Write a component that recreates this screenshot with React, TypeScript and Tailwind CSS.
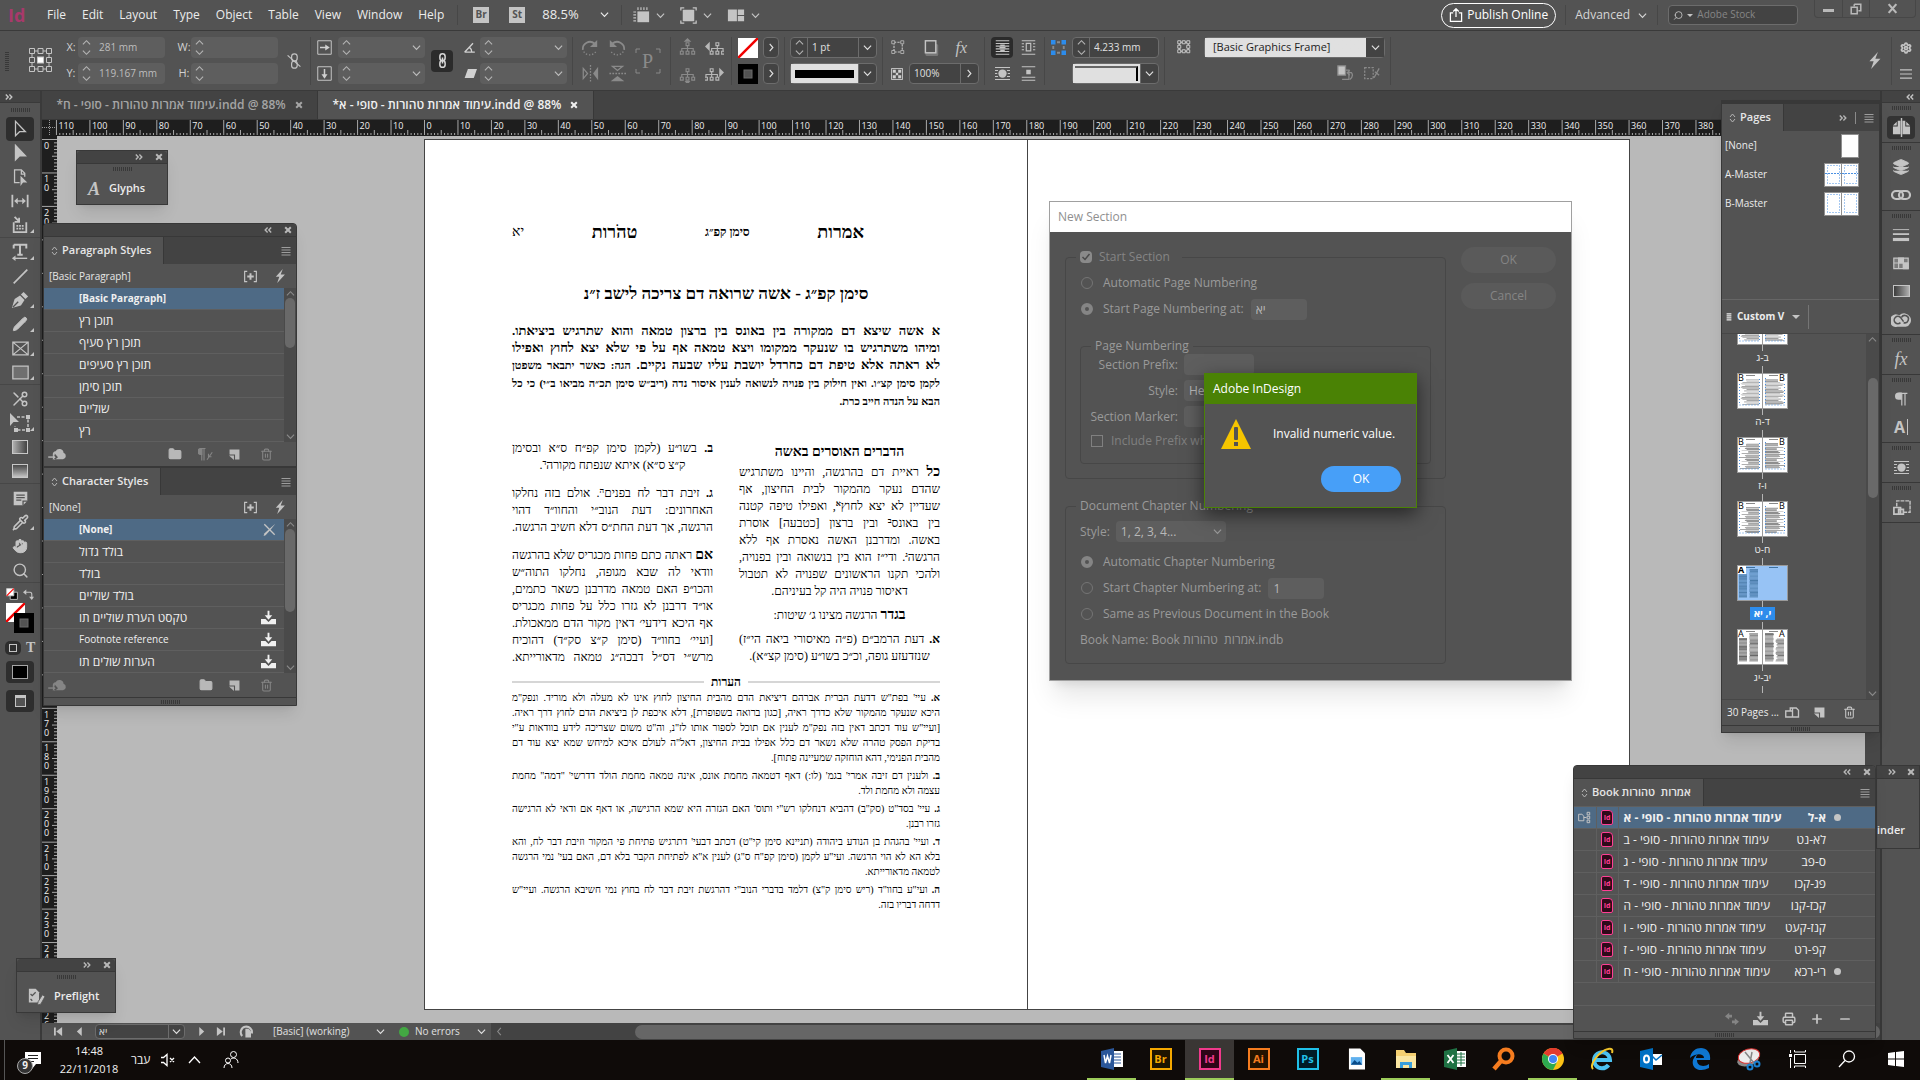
import { useState, type ReactNode } from "react";
import { Scissors, Hand, Search, Trash2, Pencil, Pipette, Folder, Link2, Settings, Layers, Printer, Plus, Minus } from "lucide-react";

const PX_PER_MM = 3.346;

/* ---------- icons ---------- */

function Svg({ children, size = 20, className = "" }: { children: ReactNode; size?: number; className?: string }) {
  return (
    <svg width={size} height={size} viewBox="0 0 20 20" fill="none" stroke="currentColor" strokeWidth={1.5} className={`shrink-0 ${className}`} aria-hidden="true">
      {children}
    </svg>
  );
}

const Chevron = ({ size = 9 }: { size?: number }) => (
  <Svg size={size}>
    <path d="M2 6l8 8 8-8" strokeWidth={2.6} />
  </Svg>
);

const ChevronRight = () => (
  <Svg size={9}>
    <path d="M6 2l7 8-7 8" strokeWidth={2.6} />
  </Svg>
);

const ChevronUp = () => (
  <Svg size={9}>
    <path d="M2 14l8-8 8 8" strokeWidth={2.5} />
  </Svg>
);

const Double = ({ left = false }: { left?: boolean }) => (
  <Svg size={8} className={left ? "rotate-180" : ""}>
    <path d="M2 4l6 6-6 6M11 4l6 6-6 6" strokeWidth={3.5} />
  </Svg>
);

const Cross = () => (
  <Svg size={8}>
    <path d="M3 3l14 14M17 3L3 17" strokeWidth={5} />
  </Svg>
);

const Burger = ({ size = 12 }: { size?: number }) => (
  <Svg size={size}>
    <path d="M1 3h18M1 8h18M1 13h18M1 18h18" strokeWidth={1.6} />
  </Svg>
);

const Updown = () => (
  <svg width="7" height="10" viewBox="0 0 7 10" fill="none" stroke="#b5b5b5" aria-hidden="true">
    <path d="M1 4l2.5-3L6 4M1 6l2.5 3L6 6" />
  </svg>
);

const Bolt = ({ size = 16 }: { size?: number }) => (
  <Svg size={size}>
    <path d="M14 0L4 11h5l-3 9L17 8h-6z" fill="currentColor" stroke="none" />
  </Svg>
);

const PlusBox = () => (
  <Svg size={13}>
    <path d="M5 2H1v16h4M15 2h4v16h-4" strokeWidth={1.8} />
    <path d="M10 5v10M5 10h10" strokeWidth={3} />
  </Svg>
);

const NewPage = () => (
  <Svg size={11}>
    <path d="M1 1h18v18h-8v-9H1z" fill="currentColor" stroke="none" />
    <path d="M0 12h9v8z" fill="currentColor" stroke="none" />
  </Svg>
);

const CloudIn = () => (
  <svg width="19" height="13" viewBox="0 0 20 14" fill="currentColor" aria-hidden="true">
    <path d="M6 12h10a3.500 3.500 0 0 0 .5-6.800A4.500 4.500 0 0 0 8 3.500 3 3 0 0 0 5 7v1h2V6l3.500 4L7 13z" />
    <path d="M0 9h6v1.500H0z" />
    <path d="M5 7l3 3-3 3z" />
  </svg>
);

const Download = ({ size = 15 }: { size?: number }) => (
  <Svg size={size}>
    <path d="M0 12h6l4 4 4-4h6v7H0z" fill="currentColor" stroke="none" />
    <path d="M10 1v7" strokeWidth={2.5} />
    <path d="M5 7h10l-5 6z" fill="currentColor" stroke="none" />
  </Svg>
);

const WrapLines = ({ kind }: { kind: "none" | "box" | "shape" | "jump" }) => (
  <Svg size={15}>
    {kind === "none" && <path d="M1 1h18M1 19h18M1 4.600h18M1 8.200h18M1 11.800h18M1 15.400h18" />}
    {kind === "none" && <path d="M7 6h6v2H7zM6 9h8v2H6zM7 12.500h6v2H7z" fill="currentColor" stroke="none" />}
    {kind === "box" && <path d="M1 1h18M1 5h3M16 5h3M1 9h3M16 9h3M1 13h3M16 13h3M1 19h18M7 4.500h6v10H7z" />}
    {kind === "shape" && <path d="M0 2h20M0 6h4M16 6h4M0 10h3M17 10h3M0 14h4M16 14h4M0 18h20" />}
    {kind === "shape" && <circle cx="10" cy="10" r="5.500" fill="currentColor" stroke="none" />}
    {kind === "jump" && <path d="M1 1h18M1 15h18M1 19h18" />}
    {kind === "jump" && <rect x="7" y="5" width="6" height="6" fill="currentColor" stroke="none" />}
  </Svg>
);

const Tree = ({ arrow }: { arrow: "up" | "down" | "left" | "right" }) => {
  const side = arrow === "left" ? 3 : arrow === "right" ? -3 : 0;
  return (
    <Svg size={19}>
      <g strokeWidth={1.2} transform={`translate(${side} 0)`}>
        <path d="M8.500 5h3v3h-3zM10 8v3M4 14v-3h12v3M10 11v3M2.500 14h3v3h-3zM8.500 14h3v3h-3zM14.500 14h3v3h-3z" />
      </g>
      {arrow === "up" && <path d="M10 0l4 4H6z" fill="currentColor" stroke="none" />}
      {arrow === "down" && <path d="M10 22l3-4H7z" fill="currentColor" stroke="none" />}
      {arrow === "left" && <path d="M0 9l5-5v10z" fill="currentColor" stroke="none" />}
      {arrow === "right" && <path d="M20 9l-5-5v10z" fill="currentColor" stroke="none" />}
    </Svg>
  );
};

const Rotate = ({ flip = false }: { flip?: boolean }) => (
  <Svg size={18} className={flip ? "-scale-x-100" : ""}>
    <path d="M2 12a8 8 0 0 1 13-7" strokeWidth={2} />
    <path d="M18 1v8h-8z" fill="currentColor" stroke="none" />
    <path d="M3 14a8 8 0 0 0 14-1" strokeDasharray="1.500 2" />
  </Svg>
);

const Mirror = ({ vertical = false }: { vertical?: boolean }) => (
  <Svg size={17} className={vertical ? "rotate-90" : ""}>
    <path d="M1.500 4v12l5-6z" />
    <path d="M19 2v16l-6-8z" fill="currentColor" stroke="none" />
    <path d="M10 0v20" strokeDasharray="2 1.500" />
  </Svg>
);

const NoneSwatch = ({ size }: { size: number }) => (
  <svg width={size} height={size} viewBox="0 0 20 20" aria-hidden="true">
    <rect width="20" height="20" fill="#fff" />
    <path d="M0 20L20 0" stroke="#f00000" strokeWidth="2.500" />
  </svg>
);

const StrokeSwatch = ({ size }: { size: number }) => (
  <svg width={size} height={size} viewBox="0 0 20 20" aria-hidden="true">
    <rect width="20" height="20" fill="#000" />
    <rect x="6" y="6" width="8" height="8" fill="#535353" stroke="#6a6a6a" />
  </svg>
);

const ArrowShape = "M5 1.500v16l4.500-4.500H16z";

type Tool = { name: string; icon: ReactNode; more?: boolean };

const toolGroups: Tool[][] = [
  [
    { name: "Selection Tool", icon: <Svg size={18}><path d={ArrowShape} strokeWidth={1.4} /></Svg> },
    { name: "Direct Selection Tool", icon: <Svg size={18}><path d={ArrowShape} fill="currentColor" /></Svg> },
    {
      name: "Page Tool",
      icon: (
        <Svg size={17}>
          <path d="M9 16H3V1h8l4 4v4M11 1v5h4" />
          <path d="M10 8v12l3-4h5z" fill="currentColor" stroke="none" />
        </Svg>
      ),
    },
    {
      name: "Gap Tool",
      icon: (
        <Svg size={18}>
          <path d="M1.500 3v14M18.500 3v14" strokeWidth={2} />
          <path d="M5 10h10" />
          <path d="M3.500 10l4-3.500v7zM16.500 10l-4-3.500v7z" fill="currentColor" stroke="none" />
        </Svg>
      ),
    },
    {
      name: "Content Collector Tool",
      more: true,
      icon: (
        <Svg size={18}>
          <path d="M3 7v11h14V7" strokeWidth={2} />
          <path d="M4 1l5 5M9 2v4.500H4" strokeWidth={2} />
          <path d="M6 11h2M9 11h2M12 11h2M6 14h2M9 14h2M12 14h2" strokeWidth={2} />
        </Svg>
      ),
    },
  ],
  [
    {
      name: "Type Tool",
      more: true,
      icon: (
        <Svg size={18}>
          <path d="M3 2h14v4M10 2v11M3 2v4M7 13h6" strokeWidth={2.2} />
          <path d="M4 17h14" />
          <path d="M1 17l4-3v6z" fill="currentColor" stroke="none" />
        </Svg>
      ),
    },
    { name: "Line Tool", icon: <Svg size={17}><path d="M2 18L18 2" strokeWidth={2} /></Svg> },
    {
      name: "Pen Tool",
      more: true,
      icon: (
        <Svg size={18}>
          <path d="M1 19l3-10 6-4 5 5-4 6z" fill="currentColor" stroke="none" />
          <path d="M11 4l3-3 5 5-3 3z" fill="currentColor" stroke="none" />
          <path d="M2 18l6-6" stroke="#535353" />
        </Svg>
      ),
    },
    { name: "Pencil Tool", more: true, icon: <Pencil size={16} fill="currentColor" strokeWidth={1.5} /> },
    { name: "Rectangle Frame Tool", more: true, icon: <Svg size={17}><path d="M1 2.500h18v15H1zM1 2.500l18 15M19 2.500l-18 15" /></Svg> },
    { name: "Rectangle Tool", more: true, icon: <Svg size={17}><path d="M1 2.500h18v15H1z" fill="#6f6f6f" /></Svg> },
  ],
  [
    { name: "Scissors Tool", icon: <Scissors size={18} strokeWidth={2} className="rotate-180" /> },
    {
      name: "Free Transform Tool",
      more: true,
      icon: (
        <Svg size={20}>
          <path d="M7 4h11v13H5v-4" strokeDasharray="3 1.500" />
          <path d="M16 2h4v4h-4zM16 15h4v4h-4zM4 15h4v4H4z" fill="currentColor" stroke="none" />
          <path d="M0 0v13l3.500-4H9z" fill="currentColor" stroke="none" />
        </Svg>
      ),
    },
    {
      name: "Gradient Swatch Tool",
      icon: <span className="h-[14px] w-4 border border-[#c8c8c8] bg-linear-to-r from-[#b0b0b0] to-[#444]" />,
    },
    {
      name: "Gradient Feather Tool",
      icon: <span className="h-[14px] w-4 border border-[#c8c8c8] bg-linear-to-b from-[#4a4a4a] to-[#c4c4c4]" />,
    },
  ],
  [
    {
      name: "Note Tool",
      icon: (
        <Svg size={17}>
          <path d="M2 2h16v11l-5 5H2z" fill="currentColor" stroke="none" />
          <path d="M5 6h10M5 9h10M5 12h6M13 18v-5h5" stroke="#535353" />
        </Svg>
      ),
    },
    { name: "Eyedropper Tool", more: true, icon: <Pipette size={17} strokeWidth={2.2} /> },
    { name: "Hand Tool", icon: <Hand size={16} fill="currentColor" strokeWidth={1.5} /> },
    { name: "Zoom Tool", icon: <Search size={17} strokeWidth={2} /> },
  ],
];

/* ---------- small shared parts ---------- */

const Grip = () => (
  <span className="h-[4px] w-[19px] bg-[repeating-linear-gradient(90deg,#383838_0_1px,transparent_1px_2px)]" />
);

function Spinner() {
  return (
    <span className="flex flex-col items-center justify-center gap-px text-[#b5b5b5]">
      <Svg size={9}><path d="M2 14l8-8 8 8" strokeWidth={2.5} /></Svg>
      <Svg size={9}><path d="M2 6l8 8 8-8" strokeWidth={2.5} /></Svg>
    </span>
  );
}

function NumberField({ label, value = "", drop = false }: { label: string; value?: string; drop?: boolean }) {
  return (
    <div className="flex h-[21px] w-[87px] items-center rounded-sm bg-[#5e5e5e] pr-1 pl-1 text-[#bdbdbd]">
      <Spinner />
      <input aria-label={label} defaultValue={value} className="ml-2 w-0 min-w-0 flex-1 bg-transparent text-[10px] outline-none" />
      {drop && <Chevron />}
    </div>
  );
}

const Divider = () => <span className="h-[48px] w-px shrink-0 bg-[#474747]" />;

function Stack({ children, className = "" }: { children: ReactNode; className?: string }) {
  return <div className={`flex shrink-0 flex-col gap-[5px] ${className}`}>{children}</div>;
}

function Slot({ children, className = "" }: { children: ReactNode; className?: string }) {
  return <span className={`flex h-[21px] items-center justify-center ${className}`}>{children}</span>;
}

/* ---------- top bars ---------- */

const menus = ["File", "Edit", "Layout", "Type", "Object", "Table", "View", "Window", "Help"];

function MenuBar() {
  return (
    <header className="flex h-[31px] items-center border-b border-[#3a3a3a] bg-[#535353] text-xs text-[#ececec]">
      <span className="w-[39px] pl-2 text-lg font-bold text-[#a8396b]">Id</span>
      <nav className="flex items-center">
        {menus.map((m) => (
          <button key={m} className="px-2">{m}</button>
        ))}
      </nav>
      <span className="mr-[15px] ml-[5px] h-5 w-px bg-[#474747]" />
      <button className="flex size-4 items-center justify-center bg-[#c4c4c4] text-[10px] font-bold text-[#535353]">Br</button>
      <button className="ml-5 flex size-4 items-center justify-center bg-[#c4c4c4] text-[10px] font-bold text-[#535353]">St</button>
      <button className="ml-[17px] flex w-[67px] items-center justify-between text-[13px]">
        88.5% <Chevron />
      </button>
      <span className="mx-[10px] ml-[12px] h-5 w-px bg-[#474747]" />
      <button aria-label="View options" className="flex items-center gap-[6px] text-[#c4c4c4]">
        <Svg size={18}>
          <path d="M6 6h13v12H6z" fill="currentColor" stroke="none" />
          <path d="M6 3h13M3 6v13" strokeWidth={3} strokeDasharray="1.300 2" />
        </Svg>
        <Chevron />
      </button>
      <button aria-label="Screen mode" className="ml-[15px] flex items-center gap-[6px] text-[#c4c4c4]">
        <Svg size={17}>
          <path d="M4 4h12v12H4z" fill="currentColor" />
          <path d="M1 4V1h4M15 1h4v3M19 16v3h-4M5 19H1v-3" />
        </Svg>
        <Chevron />
      </button>
      <button aria-label="Arrange documents" className="ml-[15px] flex items-center gap-[6px] text-[#c4c4c4]">
        <Svg size={18}>
          <path d="M1 4h10v13H1zM12 4h7v6h-7zM12 11h7v6h-7z" fill="currentColor" stroke="none" />
        </Svg>
        <Chevron />
      </button>
      <button className="ml-auto flex h-[25px] items-center gap-1 rounded-full border border-white px-[7px] text-xs font-medium text-white">
        <Svg size={14}>
          <path d="M6 7H2v12h16V7h-4M10 13V2M6 5l4-4 4 4" strokeWidth={1.8} />
        </Svg>
        Publish Online
      </button>
      <span className="mx-[9px] h-5 w-px bg-[#474747]" />
      <button className="flex items-center gap-2 text-xs text-[#d6d6d6]">
        Advanced <Chevron />
      </button>
      <span className="mx-[10px] h-5 w-px bg-[#474747]" />
      <label className="flex h-5 w-[130px] items-center gap-1 rounded-sm border border-[#6c6c6c] bg-[#434343] px-1">
        <Search size={13} className="-scale-x-100 text-[#c4c4c4]" />
        <span className="border-[3px] border-b-0 border-transparent border-t-[#c4c4c4]" />
        <input aria-label="Adobe Stock" placeholder="Adobe Stock" className="w-full bg-transparent text-[10px] outline-none placeholder:text-[#868686]" />
      </label>
      <div className="mr-1 ml-4 flex h-[18px] w-[102px] self-start rounded-b-sm border border-t-0 border-[#474747] text-[#b9b9b9]">
        <button aria-label="Minimize" className="flex w-[28px] items-center justify-center border-r border-[#474747] pt-1">
          <span className="h-[3px] w-[11px] bg-[#b9b9b9]" />
        </button>
        <button aria-label="Restore" className="flex w-[27px] items-center justify-center border-r border-[#474747]">
          <Svg size={12}>
            <path d="M7 2h11v11h-4M7 2v4" strokeWidth={2.5} />
            <path d="M2 7h10v11H2z" strokeWidth={2.5} />
          </Svg>
        </button>
        <button aria-label="Close" className="flex flex-1 items-center justify-center">
          <Svg size={11}><path d="M3 2l14 16M17 2L3 18" strokeWidth={4} /></Svg>
        </button>
      </div>
    </header>
  );
}

const boxBorder = "flex h-[21px] items-center border border-[#6c6c6c] bg-[#434343] text-[#e0e0e0]";

function ControlBar() {
  return (
    <section className="flex h-[60px] items-center border-b border-[#3a3a3a] bg-[#535353] text-[11px] text-[#d0d0d0]">
      <span className="ml-[5px] h-5 w-[4px] bg-[repeating-linear-gradient(0deg,#383838_0_1px,transparent_1px_2px)]" />
      <svg width="25" height="27" viewBox="0 0 25 27" fill="none" stroke="#c4c4c4" className="ml-[19px]" aria-hidden="true">
        <path d="M1.500 1.500h5v5h-5zM10 1.500h5v5h-5zM18.500 1.500h5v5h-5zM1.500 10.500h5v5h-5zM18.500 10.500h5v5h-5zM1.500 19.500h5v5h-5zM10 19.500h5v5h-5zM18.500 19.500h5v5h-5zM6.500 4H10M15 4h3.500M6.500 22H10M15 22h3.500M4 6.500v4M4 15.500v4M21 6.500v4M21 15.500v4" />
        <rect x="9.500" y="10" width="6" height="6" fill="#fff" />
      </svg>
      <Stack className="ml-[11px] w-[14px]">
        <Slot>X:</Slot>
        <Slot>Y:</Slot>
      </Stack>
      <Stack>
        <NumberField label="X position" value="281 mm" />
        <NumberField label="Y position" value="119.167 mm" />
      </Stack>
      <Stack className="ml-3 w-[14px]">
        <Slot>W:</Slot>
        <Slot>H:</Slot>
      </Stack>
      <Stack>
        <NumberField label="Width" />
        <NumberField label="Height" />
      </Stack>
      <button aria-label="Constrain proportions" className="mr-2 ml-2 text-[#c4c4c4]">
        <Svg size={16}>
          <rect x="7" y="1" width="7" height="9" rx="3.500" />
          <rect x="7" y="10" width="7" height="9" rx="3.500" />
          <path d="M2 3l16 14" />
        </Svg>
      </button>
      <Divider />
      <Stack className="mx-[6px] w-[15px]">
        <Slot><Svg size={15}><path d="M1 1v18M1 1h18M1 19h18M19 1v18" strokeWidth={1.2} /><path d="M4 10h9" strokeWidth={2} /><path d="M11 6l6 4-6 4z" fill="currentColor" stroke="none" /></Svg></Slot>
        <Slot><Svg size={15}><path d="M1 1v18M1 1h18M1 19h18M19 1v18" strokeWidth={1.2} /><path d="M10 4v9" strokeWidth={2} /><path d="M6 11l4 6 4-6z" fill="currentColor" stroke="none" /></Svg></Slot>
      </Stack>
      <Stack>
        <NumberField label="Scale X" drop />
        <NumberField label="Scale Y" drop />
      </Stack>
      <button aria-label="Constrain scaling" className="ml-[6px] flex size-[22px] items-center justify-center rounded-sm bg-[#2b2b2b] text-[#d8d8d8]">
        <Svg size={15}>
          <rect x="6.500" y="1" width="7" height="9" rx="3.500" strokeWidth={2} />
          <rect x="6.500" y="10" width="7" height="9" rx="3.500" strokeWidth={2} />
          <path d="M10 6v8" strokeWidth={2} />
        </Svg>
      </button>
      <Stack className="ml-[7px] w-[20px]">
        <Slot><Svg size={12}><path d="M1 17h17M1 17L15 2M9 9c3 2 4 5 4 8" strokeWidth={2.2} /></Svg></Slot>
        <Slot><Svg size={13}><path d="M6 3h14l-5 14H1z" fill="currentColor" stroke="none" /></Svg></Slot>
      </Stack>
      <Stack>
        <NumberField label="Rotation" drop />
        <NumberField label="Shear" drop />
      </Stack>
      <span className="w-[5px]" />
      <Divider />
      <Stack className="ml-2 w-[18px] text-[#8a8a8a]">
        <Slot><Rotate /></Slot>
        <Slot><Mirror /></Slot>
      </Stack>
      <Stack className="ml-[9px] w-[18px] text-[#8a8a8a]">
        <Slot><Rotate flip /></Slot>
        <Slot><Mirror vertical /></Slot>
      </Stack>
      <svg width="26" height="26" viewBox="0 0 26 26" fill="none" stroke="#8a8a8a" className="mx-[9px]" aria-hidden="true">
        <path d="M1 5V1h4M21 1h4v4M25 21v4h-4M5 25H1v-4" />
        <text x="7" y="20" fill="#8a8a8a" stroke="none" fontSize="20" fontFamily="Liberation Serif">P</text>
      </svg>
      <Divider />
      <Stack className="ml-[6px] w-5 text-[#8a8a8a]">
        <Slot><Tree arrow="up" /></Slot>
        <Slot><Tree arrow="down" /></Slot>
      </Stack>
      <Stack className="mx-[7px] w-5 text-[#b8b8b8]">
        <Slot><Tree arrow="left" /></Slot>
        <Slot><Tree arrow="right" /></Slot>
      </Stack>
      <Divider />
      <Stack className="ml-[6px]">
        <Slot><NoneSwatch size={20} /></Slot>
        <Slot><StrokeSwatch size={20} /></Slot>
      </Stack>
      <Stack className="mx-[5px]">
        <button aria-label="Fill" className={`${boxBorder} w-4 justify-center rounded-sm`}><ChevronRight /></button>
        <button aria-label="Stroke" className={`${boxBorder} w-4 justify-center rounded-sm`}><ChevronRight /></button>
      </Stack>
      <Divider />
      <Stack className="mx-[5px] w-[87px]">
        <div className={`${boxBorder} rounded-sm`}>
          <span className="flex h-full w-[17px] items-center justify-center border-r border-[#6c6c6c]"><Spinner /></span>
          <input aria-label="Stroke weight" defaultValue="1 pt" className="ml-1 w-0 flex-1 bg-transparent text-[10px] outline-none" />
          <span className="flex h-full w-[18px] items-center justify-center border-l border-[#6c6c6c]"><Chevron /></span>
        </div>
        <button aria-label="Stroke style" className={`${boxBorder} rounded-sm`}>
          <span className="flex h-full flex-1 items-center bg-[#e0e0e0] px-1"><span className="h-2 w-full bg-black" /></span>
          <span className="flex h-full w-[18px] items-center justify-center border-l border-[#6c6c6c]"><Chevron /></span>
        </button>
      </Stack>
      <Divider />
      <Stack className="mr-[5px] ml-2 w-[88px]">
        <div className="flex h-[21px] items-center justify-between text-[#c4c4c4]">
          <Svg size={15}><path d="M4 3h11v13H4z" strokeDasharray="3 1.500" /><path d="M1 1h4v4H1zM13 1h4v4h-4zM1 14h4v4H1zM13 14h4v4h-4z" fill="#535353" strokeWidth={1} /></Svg>
          <Svg size={16}><rect x="3" y="5" width="16" height="15" rx="2" fill="#777" stroke="none" /><rect x="3" y="1" width="13" height="15" fill="#535353" strokeWidth={1.8} /></Svg>
          <span className="pr-3 font-['Liberation_Serif',serif] text-base italic">fx</span>
        </div>
        <div className="flex items-center justify-between">
          <Svg size={12}><rect x="1" y="1" width="18" height="18" /><path d="M3 3h5v5H3zM12 3h5v5h-5zM8 8h4v4H8zM3 12h5v5H3zM12 12h5v5h-5z" fill="currentColor" stroke="none" /></Svg>
          <div className={`${boxBorder} w-[70px] rounded-sm`}>
            <input aria-label="Opacity" defaultValue="100%" className="ml-1 w-0 flex-1 bg-transparent text-[10px] outline-none" />
            <span className="flex h-full w-[18px] items-center justify-center border-l border-[#6c6c6c]"><ChevronRight /></span>
          </div>
        </div>
      </Stack>
      <Divider />
      <Stack className="ml-[6px] text-[#c4c4c4]">
        <button aria-label="No text wrap" className="flex h-[21px] w-[22px] items-center justify-center rounded-sm bg-[#2b2b2b]"><WrapLines kind="none" /></button>
        <Slot><WrapLines kind="shape" /></Slot>
      </Stack>
      <Stack className="mx-2 text-[#c4c4c4]">
        <Slot><WrapLines kind="box" /></Slot>
        <Slot><WrapLines kind="jump" /></Slot>
      </Stack>
      <Divider />
      <Stack className="mx-[6px] self-start pt-[6px]">
        <Slot>
          <Svg size={15} className="text-[#2d8ceb]">
            <path d="M0 0h6v6H0zM14 0h6v6h-6zM0 14h6v6H0zM14 14h6v6h-6z" fill="currentColor" stroke="none" />
            <path d="M8 3h4M8 17h4M3 8v4M17 8v4" stroke="#8a8a8a" strokeWidth={2.5} />
          </Svg>
        </Slot>
      </Stack>
      <Stack className="w-[87px]">
        <div className={`${boxBorder} rounded-sm`}>
          <span className="flex h-full w-[17px] items-center justify-center border-r border-[#6c6c6c]"><Spinner /></span>
          <input aria-label="Corner size" defaultValue="4.233 mm" className="ml-1 w-0 flex-1 bg-transparent text-[10px] outline-none" />
        </div>
        <button aria-label="Corner shape" className={`${boxBorder} rounded-sm`}>
          <span className="flex h-full flex-1 bg-[#e0e0e0] p-[2px]"><span className="h-[15px] w-full border-t-2 border-r-2 border-t-[#666] border-r-black" /></span>
          <span className="flex h-full w-[18px] items-center justify-center border-l border-[#6c6c6c]"><Chevron /></span>
        </button>
      </Stack>
      <span className="w-[5px]" />
      <Divider />
      <Stack className="mx-3 self-start pt-[6px]">
        <Slot><Svg size={15}><path d="M3 3h12v12H3z" /><path d="M1 1h4v4H1zM7 1h4v4H7zM13 1h4v4h-4zM1 7h4v4H1zM13 7h4v4h-4zM1 13h4v4H1zM7 13h4v4H7zM13 13h4v4h-4z" fill="#535353" strokeWidth={1.2} /></Svg></Slot>
      </Stack>
      <Stack className="w-[181px]">
        <div className={`${boxBorder} relative rounded-sm`}>
          <select aria-label="Object style" className="h-full w-full appearance-none bg-transparent bg-linear-to-r from-[#e0e0e0] from-90% to-[#434343] to-90% pl-2 text-[11px] text-[#1c1c1c] outline-none">
            <option>[Basic Graphics Frame]</option>
          </select>
          <span className="pointer-events-none absolute right-1"><Chevron /></span>
        </div>
        <div className="flex h-[21px] items-center justify-end gap-[9px] pr-[5px] text-[#8a8a8a]">
          <Svg size={17}><path d="M6 6h8v11H6" /><path d="M1 1h9v11H1z" fill="#c4c4c4" /><path d="M13 9h4q3 4-2 8M15 6l-3 3 3 3" /></Svg>
          <Svg size={17}><path d="M2 3h10v13H2z" strokeDasharray="2.500 1.500" /><path d="M13 15l6-11M14 8l5 4" /></Svg>
        </div>
      </Stack>
      <span className="w-[5px]" />
      <Divider />
      <button aria-label="Quick apply" className="mr-2 ml-auto text-[#c4c4c4]"><Bolt size={17} /></button>
      <Divider />
      <Stack className="w-7 text-[#c4c4c4]">
        <button aria-label="Settings" className="flex h-[21px] items-center justify-center"><Settings size={12} strokeWidth={3.5} /></button>
        <button aria-label="Panel menu" className="flex h-[21px] items-center justify-center"><Svg size={12}><path d="M0 3h20M0 10h20M0 17h20" strokeWidth={2} /></Svg></button>
      </Stack>
    </section>
  );
}

/* ---------- left tool bar ---------- */

function ToolBar({ active, onPick }: { active: string; onPick: (name: string) => void }) {
  return (
    <aside className="flex w-[42px] shrink-0 flex-col border-r-2 border-[#3a3a3a] bg-[#535353] text-[#c4c4c4]">
      <div className="flex h-3 items-center border-b border-[#3a3a3a] bg-[#434343] pl-[5px]"><Double /></div>
      <div className="flex h-[14px] items-center justify-center"><Grip /></div>
      {toolGroups.map((group, i) => (
        <div key={i} className="mb-[2px] flex flex-col items-center border-b border-[#474747]">
          {group.map((t) => (
            <button
              key={t.name}
              aria-label={t.name}
              onClick={() => onPick(t.name)}
              className={`relative flex h-6 w-7 items-center justify-center rounded-sm ${t.name === active ? "bg-[#2e2e2e]" : ""}`}
            >
              {t.icon}
              {t.more && <span className="absolute right-0 bottom-1 border-[2px] border-t-transparent border-r-current border-b-current border-l-transparent" />}
            </button>
          ))}
        </div>
      ))}
      <div className="flex h-[18px] items-center justify-between px-[6px]">
        <Svg size={12}><path d="M7 7h12v12H7z" fill="#000" /><path d="M1 1h12v12H1z" fill="#fff" /><path d="M1 13L13 1" stroke="red" strokeWidth={2} /></Svg>
        <Svg size={11}><path d="M4 6h9q3 0 3 4v5" strokeWidth={2} /><path d="M0 6l6-5v10zM16 20l-5-6h9z" fill="currentColor" stroke="none" /></Svg>
      </div>
      <div className="relative ml-[6px] h-[32px] w-[28px]">
        <NoneSwatch size={19} />
        <span className="absolute right-0 bottom-[2px]"><StrokeSwatch size={20} /></span>
      </div>
      <div className="flex h-[26px] items-center gap-[6px] pl-[6px]">
        <button aria-label="Formatting affects container" className="flex h-3 w-[14px] items-center justify-center rounded-sm bg-[#2e2e2e] ring-1 ring-[#2e2e2e]"><span className="size-2 border border-[#c4c4c4]" /></button>
        <button aria-label="Formatting affects text" className="font-['Liberation_Serif',serif] text-sm font-bold">T</button>
      </div>
      <button aria-label="Apply color" className="mx-auto flex h-[22px] w-7 items-center justify-center rounded-sm bg-[#2e2e2e]"><span className="h-[14px] w-4 border border-[#a5a5a5] bg-black" /></button>
      <button aria-label="Normal screen mode" className="mx-auto mt-[7px] flex h-[22px] w-7 items-center justify-center rounded-sm bg-[#2e2e2e]"><span className="h-3 w-[11px] border border-t-[3px] border-[#c4c4c4] bg-[#535353]" /></button>
    </aside>
  );
}

/* ---------- rulers ---------- */

const range = (from: number, to: number) => Array.from({ length: to - from + 1 }, (_, i) => from + i);

function TopRuler() {
  const zero = 382.5;
  return (
    <svg width="100%" height="16" className="block bg-[#1e1e1e] text-[9px]" fill="#f0f0f0" aria-hidden="true">
      <path d="M7.500 0v16M0 7.500h15" stroke="#999" strokeDasharray="1 1" />
      {range(-110, 440).map((mm) => {
        const x = zero + mm * PX_PER_MM;
        const y = mm % 10 === 0 ? 0 : mm % 5 === 0 ? 10 : 13;
        return <line key={mm} x1={x} x2={x} y1={y} y2={15} stroke="#a8a8a8" />;
      })}
      {range(-11, 38).map((n) => (
        <text key={n} x={zero + n * 10 * PX_PER_MM + 2} y={9}>{Math.abs(n * 10)}</text>
      ))}
    </svg>
  );
}

function SideRuler() {
  return (
    <svg width="15" height="887" className="block shrink-0 bg-[#1e1e1e] text-[9px]" fill="#f0f0f0" aria-hidden="true">
      {range(0, 264).map((mm) => {
        const y = 3.5 + mm * PX_PER_MM;
        const x = mm % 10 === 0 ? 0 : mm % 5 === 0 ? 10 : 12;
        return <line key={mm} x1={x} x2={15} y1={y} y2={y} stroke="#a8a8a8" />;
      })}
      {range(0, 26).map((n) =>
        String(n * 10).split("").map((d, i) => (
          <text key={`${n}-${i}`} x={2} y={n * 10 * PX_PER_MM + 13 + i * 9}>{d}</text>
        ))
      )}
    </svg>
  );
}

/* ---------- document ---------- */

function Lines({ lines, last = "right", className = "" }: { lines: ReactNode[]; last?: "right" | "center" | "justify"; className?: string }) {
  const lastAlign = {
    right: "[text-align-last:right]",
    center: "[text-align-last:center]",
    justify: "[text-align-last:justify]",
  }[last];
  return (
    <p className={className}>
      {lines.map((line, i) => (
        <span key={i} className={`block whitespace-nowrap ${i === lines.length - 1 ? lastAlign : "[text-align-last:justify]"}`}>
          {line}
        </span>
      ))}
    </p>
  );
}

const Sup = ({ children }: { children: ReactNode }) => <sup className="text-[8px] font-bold">{children}</sup>;

function Notes() {
  return (
    <div className="flex flex-col gap-[3px] text-[10px] leading-[15px]">
      <Lines
        lines={[
          <><b>א.</b> עיי' בפת"ש דדעת הברית אברהם דיציאת הדם מהבית החיצון לחוץ אינו לא מעלה ולא מוריד. ונפק"מ</>,
          "היכא שנעקר מהמקור שלא כדרך ראיה, [כגון ברואה בשפופרת], דלא איכפת לן ביציאת הדם לחוץ דרך ראיה.",
          '[ועיי"ש עוד דכתב דאין בזה נפק"מ לענין אם תוכל לספור אותו לז"נ, וה"ט משום שצריכה לידע בוודאות ע"י',
          'בדיקת הפסק טהרה שלא נשאר דם כלל אפילו בבית החיצון, דאל"ה לעולם איכא למיחש שמא יצא עוד דם',
          "מהבית הפנימי, דהא הוחזקה שמעיינה פתוח].",
        ]}
      />
      <Lines
        lines={[
          <><b>ב.</b> ולענין דם זיבה אמרי' בגמ' (לו:) דאף דטמאה מחמת אונס, אינה טמאה מחמת הולד דדרשי' "דמה" מחמת</>,
          "עצמה ולא מחמת ולד.",
        ]}
      />
      <Lines
        lines={[
          <><b>ג.</b> עיי' בסד"ט (סק"ב) דהביא דנחלקו רש"י ותוס' האם הגזרה היא שמא הרגישה, או דאף אם ודאי לא הרגישה</>,
          "גזרו רבנן.",
        ]}
      />
      <Lines
        lines={[
          <><b>ד.</b> ועיי' בהגהת בן הנודע ביהודה (תניינא סימן קי"ט) דכתב דבעי' דתרגיש פתיחת פי המקור וזיבת דבר לח, והא</>,
          'בלא הא לא הוי הרגשה. ועי"ע לקמן (סימן קפ"ח ס"ג) לענין א"א לפתיחת הקבר בלא דם, האם בעי\' נמי הרגשה',
          "לטמאה מדאורייתא.",
        ]}
      />
      <Lines
        lines={[
          <><b>ה.</b> ועי"ע בחוו"ד (ריש סימן ק"צ) דלמד בדברי הנוב"י דהרגשת זיבת דבר לח בחוץ נמי חשיבא הרגשה. ועיי"ש</>,
          "דדחה דבריו בזה.",
        ]}
      />
    </div>
  );
}

function LeftPage() {
  return (
    <article dir="rtl" className="w-[603px] shrink-0 border-l border-[#444] bg-white px-[87px] pt-[80px] font-['Liberation_Serif','DejaVu_Sans',serif] text-black">
      <header className="flex h-6 items-center justify-between pr-[76px] text-xs">
        <b className="text-lg">אמרות</b>
        <b>סימן קפ״ג</b>
        <b className="text-lg">טהֹרות</b>
        <span className="text-sm">יא</span>
      </header>
      <h1 className="mt-[38px] text-center text-[17px] leading-6 font-bold">סימן קפ״ג - אשה שרואה דם צריכה לישב ז״נ</h1>
      <Lines
        className="mt-4 text-[13px] leading-[17px] font-bold"
        lines={[
          "א אשה שיצא דם ממקורה בין באונס בין ברצון טמאה והוא שתרגיש ביציאתו.",
          "ומיהו משתרגיש בו שנעקר ממקומו ויצא טמאה אף על פי שלא יצא לחוץ ואפילו",
          <>לא ראתה אלא טיפת דם כחרדל יושבת עליו שבעה נקיים. <span className="text-[11px]">הגה: כאשר יתבאר משפטן</span></>,
          <span className="text-[11px]">לקמן סימן קצ״ו. ואין חילוק בין פנויה לנשואה לענין איסור נדה (ריב״ש סימן תכ״ה מביאו ב״י) כי כל</span>,
          <span className="text-[11px]">הבא על הנדה חייב כרת.</span>,
        ]}
      />
      <div className="mt-[30px] flex justify-between text-xs leading-[17px]">
        <div className="flex w-[201px] flex-col gap-[7px] pt-[3px]">
          <div>
            <h2 className="mb-[3px] text-center text-sm leading-[18px] font-bold">הדברים האוסרים באשה</h2>
            <Lines
              last="center"
              lines={[
                <><b className="text-sm leading-none">כל</b> ראיית דם בהרגשה, והיינו משתרגיש</>,
                "שהדם נעקר מהמקור לבית החיצון, אף",
                <>שעדיין לא יצא לחוץ<Sup>א</Sup>, ואפילו טיפה קטנה</>,
                <>בין באונס<Sup>ב</Sup> ובין ברצון [כטבעה] אוסרת</>,
                "באשה. ומדרבנן האשה נאסרת אף ללא",
                <>הרגשה<Sup>ג</Sup>. ודי״ז הוא בין בנשואה ובין בפנויה,</>,
                "ולהכי תקנו הראשונים שפנויה לא תטבול",
                "דאיסור פנויה היה קל בעיניהם.",
              ]}
            />
          </div>
          <Lines last="center" lines={[<><b className="text-sm leading-none">בגדר</b> הרגשה מצינו ג׳ שיטות:</>]} />
          <Lines
            last="center"
            lines={[<><b>א.</b> דעת הרמב״ם (פ״ה מאיסורי ביאה הי״ז)</>, "שנזדעזע גופה, וכ״כ בשו״ע (סימן קצ״א)."]}
          />
        </div>
        <div className="flex w-[201px] flex-col gap-[11px]">
          <Lines
            last="center"
            lines={[<><b>ב.</b> בשו״ע (לקמן סימן קפ״ח ס״א ובסימן</>, <>ק״צ ס״א) איתא שנפתח מקורה<Sup>ד</Sup>.</>]}
          />
          <Lines
            last="justify"
            lines={[
              <><b>ג.</b> זיבת דבר לח בפנים<Sup>ה</Sup>. אולם בזה נחלקו</>,
              "האחרונים: דעת הנוב״י והחוו״ד דהוי",
              "הרגשה, אך דעת החת״ס דלא חשיב הרגשה.",
            ]}
          />
          <Lines
            last="justify"
            lines={[
              <><b className="text-sm leading-none">אם</b> ראתה כתם פחות מכגריס שלא בהרגשה</>,
              "וודאי לה שבא מגופה, נחלקו התוה״ש",
              "והכו״פ האם טמאה מדרבנן כשאר כתמים,",
              "או״ד דרבנן לא גזרו כלל על פחות מכגריס",
              "אף היכא דידעי׳ דאין מקור הדם ממאכולת.",
              "[ועיי׳ בחוו״ד (סימן ק״צ סק״ד) דהוכיח",
              "מרש״י דס״ל דבכה״ג טמאה מדאורייתא.",
            ]}
          />
        </div>
      </div>
      <div className="mt-2 flex h-4 items-center gap-[7px] text-xs font-bold before:h-[2px] before:flex-1 before:bg-[#d6d6d6] after:h-[2px] after:flex-1 after:bg-[#d6d6d6]">
        הערות
      </div>
      <Notes />
    </article>
  );
}

/* ---------- floating panels ---------- */

function WindowStrip({ left = true }: { left?: boolean }) {
  return (
    <div className="flex h-[13px] items-center justify-end gap-[12px] rounded-t-sm border-b border-[#383838] bg-[#434343] pr-1 text-[#b8b8b8]">
      <Double left={left} />
      <button aria-label="Close"><Cross /></button>
    </div>
  );
}

function PanelTabs({ title, children }: { title: string; children?: ReactNode }) {
  return (
    <div className="flex h-[27px] bg-[#434343]">
      <button className="flex items-center gap-1 border-r border-[#383838] bg-[#535353] pr-3 pl-[7px] text-[11px] font-semibold whitespace-pre text-[#e6e6e6]">
        <Updown /> {title}
      </button>
      <span className="ml-auto flex items-center gap-2 pr-[5px] text-[#b5b5b5]">
        {children}
        <button aria-label="Panel menu"><Burger size={10} /></button>
      </span>
    </div>
  );
}

function ScrollRail({ className, thumb }: { className: string; thumb: string }) {
  return (
    <div className={`flex flex-col items-center justify-between bg-[#4a4a4a] py-px text-[#8a8a8a] ${className}`}>
      <ChevronUp />
      <span className={`mb-auto w-[10px] rounded-full bg-[#696969] ${thumb}`} />
      <Chevron />
    </div>
  );
}

type StyleRow = { name: string; latin?: boolean; mark?: "none" | "import" };

function StyleList({ title, current, rows, thumb, footer }: { title: string; current: string; rows: StyleRow[]; thumb: string; footer: ReactNode }) {
  const [selected, setSelected] = useState(0);
  return (
    <section>
      <PanelTabs title={title} />
      <div className="flex h-6 items-center gap-4 pr-[9px] pl-[5px] text-[10px] text-[#e6e6e6]">
        <span className="mr-auto">{current}</span>
        <button aria-label="Clear overrides" className="text-[#c4c4c4]"><PlusBox /></button>
        <button aria-label="Quick apply" className="text-[#c4c4c4]"><Bolt size={14} /></button>
      </div>
      <div className="flex">
        <ul className="flex-1">
          {rows.map((r, i) => (
            <li key={r.name} className={`border-b border-[#5f5f5f] ${i === selected ? "bg-[#4e6a85] font-bold" : ""}`}>
              <button onClick={() => setSelected(i)} className={`flex h-[21px] w-full items-center justify-between pr-2 pl-[35px] text-[#f0f0f0] ${r.latin ? "text-[10px]" : "text-xs"}`}>
                {r.name}
                {r.mark === "import" && <Download />}
                {r.mark === "none" && <Svg size={13} className="text-[#c4c4c4]"><path d="M2 2l16 16" strokeWidth={2} /><path d="M19 1l-7 9-8 9-3 1 1-4 9-8z" fill="currentColor" stroke="none" /></Svg>}
              </button>
            </li>
          ))}
        </ul>
        <ScrollRail className="w-3" thumb={thumb} />
      </div>
      <div className="flex h-6 items-center text-[#b8b8b8]">{footer}</div>
    </section>
  );
}

const paragraphStyles: StyleRow[] = [
  { name: "[Basic Paragraph]", latin: true },
  { name: "תוכן רץ" },
  { name: "תוכן רץ סעיף" },
  { name: "תוכן רץ סעיפים" },
  { name: "תוכן סימן" },
  { name: "שוליים" },
  { name: "רץ" },
];

const characterStyles: StyleRow[] = [
  { name: "[None]", latin: true, mark: "none" },
  { name: "בולד גדול" },
  { name: "בולד" },
  { name: "בולד שוליים" },
  { name: "טקסט הערת שוליים תו", mark: "import" },
  { name: "Footnote reference", latin: true, mark: "import" },
  { name: "הערות שולים תו", mark: "import" },
];

function StylesPanel() {
  return (
    <div className="absolute top-[223px] left-[43px] w-[254px] rounded-t border border-[#383838] bg-[#535353] shadow-lg">
      <WindowStrip />
      <StyleList
        title="Paragraph Styles"
        current="[Basic Paragraph]"
        rows={paragraphStyles}
        thumb="h-[50px]"
        footer={
          <>
            <span className="ml-1"><CloudIn /></span>
            <span className="ml-auto flex items-center gap-4 pr-[23px]">
              <Folder size={14} fill="currentColor" />
              <Svg size={15} className="text-[#858585]"><path d="M8 2v16M5 2v16M3 2h7M12 17l7-10M14 9v4h4" /><path d="M5 2v8H4a4 4 0 0 1 0-8z" fill="currentColor" /></Svg>
              <NewPage />
              <Trash2 size={13} className="ml-1 text-[#858585]" />
            </span>
          </>
        }
      />
      <div className="h-[2px] bg-[#383838]" />
      <StyleList
        title="Character Styles"
        current="[None]"
        rows={characterStyles}
        thumb="h-[83px]"
        footer={
          <>
            <span className="ml-1 text-[#858585]"><CloudIn /></span>
            <span className="ml-auto flex items-center gap-4 pr-[23px]">
              <Folder size={14} fill="currentColor" />
              <NewPage />
              <Trash2 size={13} className="ml-1 text-[#858585]" />
            </span>
          </>
        }
      />
      <div className="flex h-2 items-center justify-center border-t border-[#383838]"><Grip /></div>
    </div>
  );
}

function MiniPanel({ title, icon, className }: { title: string; icon: ReactNode; className: string }) {
  return (
    <div className={`absolute border border-[#383838] bg-[#535353] shadow-lg ${className}`}>
      <WindowStrip left={false} />
      <div className="flex h-[9px] items-center justify-center"><Grip /></div>
      <button className="flex h-[31px] w-full items-center gap-[9px] pl-[11px] text-[11px] font-semibold text-[#ececec]">
        {icon}
        {title}
      </button>
    </div>
  );
}

/* ---------- pages panel ---------- */

const spreads = [
  { label: "ב-ג", master: "B", seed: 3 },
  { label: "ד-ה", master: "B", seed: 5 },
  { label: "ו-ז", master: "B", seed: 19 },
  { label: "ח-ט", master: "B", seed: 11 },
  { label: "י, יא", master: "A", seed: 13, active: true },
  { label: "יב-יג", master: "A", seed: 17 },
];

const noise = (i: number, seed: number) => ((i * i * 7 + i * seed * 3 + seed) % 11) / 11;

function SpreadThumb({ master, seed, active }: { master: string; seed: number; active?: boolean }) {
  return (
    <svg width="51" height="36" viewBox="0 0 51 36" className="block" aria-hidden="true">
      <rect x="0.500" y="0.500" width="50" height="35" fill={active ? "#97c3f5" : "#fff"} stroke="#9a9a9a" />
      {range(0, 25).map((i) => {
        const a = noise(i, seed);
        const b = noise(i + 3, seed);
        if (master === "A") {
          return (
            <g key={i} fill={active ? "#3f719f" : "#555"}>
              <rect x={2} y={9 + i * 0.9} width={8} height="1" opacity={0.4 + a * 0.6} />
              <rect x={12 + b} y={4 + i * 1.1} width={9 - b} height="1" opacity={0.4 + b * 0.6} />
              {!active && <rect x={28} y={4 + i * 1.1} width={8 + a} height="1" opacity={0.4 + a * 0.6} />}
              {!active && i > 4 && <rect x={38 + a * 3} y={4 + i * 1.1} width={9 - a * 3} height="1" opacity={0.3 + b * 0.6} />}
            </g>
          );
        }
        return (
          <g key={i} fill="#444">
            <rect x={3 + a * 9} y={6 + i} width={19 - a * 9} height="1" opacity={0.15 + b * 0.45} />
            <rect x={28} y={6 + i} width={20 - b * 9} height="1" opacity={0.15 + a * 0.5} />
          </g>
        );
      })}
      {master === "B" && <path d="M2.500 5v27h20v-27M28.500 5v27h19v-27" fill="none" stroke="#4a90e2" strokeDasharray="1 2" />}
      <path d="M9 2.500h9M32 2.500h9" stroke={active ? "#3f719f" : "#888"} />
      {!active && <path d="M25.500 0v36" stroke="#9a9a9a" />}
      <rect x="1" y="1" width="8" height="8" fill="#fff" />
      <text x="1" y="8" fontSize="9" fontWeight={active ? 700 : 400}>{master}</text>
      {!active && <rect x="41" y="1" width="8" height="8" fill="#fff" />}
      {!active && <text x="42" y="8" fontSize="9">{master}</text>}
    </svg>
  );
}

function MasterRow({ name, pages, dashed = false }: { name: string; pages: number; dashed?: boolean }) {
  return (
    <li className="flex h-[29px] items-center justify-between">
      {name}
      <svg width={pages * 17 + 1} height="24" fill="#fff" stroke="#8f8f8f" aria-hidden="true">
        {range(0, pages - 1).map((i) => (
          <g key={i}>
            <rect x={i * 17 + 0.5} y="0.500" width="17" height="23" />
            {pages > 1 && <rect x={i * 17 + 3.5} y="2.500" width="12" height="18" stroke="#4a90e2" strokeDasharray="1 2" />}
            {dashed && <path d={`M${i * 17 + 1} 10.500h16`} stroke="#4a90e2" strokeDasharray="2 1" />}
          </g>
        ))}
      </svg>
    </li>
  );
}

function PagesPanel() {
  return (
    <div className="absolute top-[100px] right-[40px] w-[159px] border border-[#383838] bg-[#535353] text-[10px] text-[#ececec] shadow-lg">
      <div className="h-[3px] bg-[#383838]" />
      <PanelTabs title="Pages">
        <Double />
        <span className="h-3 w-px bg-[#8a8a8a]" />
      </PanelTabs>
      <ul className="h-[169px] border-b border-[#666] pr-[20px] pl-[3px]">
        <MasterRow name="[None]" pages={1} />
        <MasterRow name="A-Master" pages={2} dashed />
        <MasterRow name="B-Master" pages={2} />
      </ul>
      <div className="flex h-[34px] items-center gap-1 border-b border-[#474747] pl-[3px]">
        <Svg size={8}><path d="M4 2h12M4 7h12M4 12h12M4 17h12" strokeWidth={3} /></Svg>
        <button className="flex items-center gap-2 font-bold">
          Custom V <span className="border-[4px] border-b-0 border-transparent border-t-[#c4c4c4]" />
        </button>
        <span className="ml-1 h-6 w-px bg-[#757575]" />
      </div>
      <div className="flex h-[365px] overflow-hidden">
        <ul className="-mt-[25px] w-[81px]">
          {spreads.map((s) => (
            <li key={s.label} className="flex h-16 flex-col items-center">
              <SpreadThumb master={s.master} seed={s.seed} active={s.active} />
              <span className="h-[6px] w-px bg-[#b5b5b5]" />
              <span className={`px-1 leading-[13px] ${s.active ? "bg-[#2d8ceb] font-bold text-white" : ""}`}>{s.label}</span>
              <span className="mt-[2px] h-[7px] w-px bg-[#b5b5b5]" />
            </li>
          ))}
        </ul>
        <ScrollRail className="ml-auto w-[13px]" thumb="mt-[34px] h-[120px]" />
      </div>
      <div className="flex h-[26px] items-center gap-[14px] border-t border-[#474747] pl-[5px] text-[#c4c4c4]">
        <span className="-mr-2 text-[#ececec]">30 Pages ...</span>
        <Svg size={15}><path d="M1 8h9v8H1zM10 4h5l3 3v9h-8zM7 8V4h3" strokeWidth={1.8} /></Svg>
        <NewPage />
        <Trash2 size={13} className="ml-1" />
      </div>
      <div className="flex h-[7px] items-center justify-center border-t border-[#383838]"><Grip /></div>
    </div>
  );
}

const dockGroups: { name: string; icon: ReactNode }[][] = [
  [{ name: "Pages", icon: <Svg size={19}><path d="M1 9h5V3h3v14H1zM14 3h-3v14h8V9h-5z" fill="currentColor" stroke="none" /><path d="M1 8l4-4v4zM19 8l-4-4v4z" fill="currentColor" stroke="none" /><path d="M10 0v20" /></Svg> }],
  [
    { name: "Layers", icon: <Layers size={18} fill="currentColor" strokeWidth={1.2} /> },
    { name: "Links", icon: <Svg size={20}><rect x="1" y="6" width="11" height="8" rx="4" strokeWidth={2.2} /><rect x="8" y="6" width="11" height="8" rx="4" strokeWidth={2.2} /></Svg> },
  ],
  [
    { name: "Stroke", icon: <Svg size={18}><path d="M1 4h18" strokeWidth={1} /><path d="M1 9h18" strokeWidth={2} /><path d="M1 15h18" strokeWidth={3.5} /></Svg> },
    { name: "Swatches", icon: <Svg size={16}><path d="M1 4h18v13H1z" fill="#7b7b7b" /><path d="M7 4h6v6H7zM13 10h6v7h-6z" fill="currentColor" /><path d="M1 10h18M7 4v13M13 4v13" /></Svg> },
    { name: "Gradient", icon: <span className="h-3 w-[17px] border border-[#c4c4c4] bg-linear-to-r from-[#3c3c3c] to-[#b0b0b0]" /> },
    {
      name: "CC Libraries",
      icon: (
        <Svg size={21}>
          <path d="M6 17a6 6 0 1 1 2-11 6.500 6.500 0 1 1 6 11z" fill="currentColor" stroke="none" />
          <path d="M9 13a3.500 3.500 0 1 1 0-5l3 4M10 8a3.500 3.500 0 1 1 2 5" stroke="#535353" />
        </Svg>
      ),
    },
  ],
  [{ name: "Effects", icon: <span className="font-['Liberation_Serif',serif] text-lg leading-none italic">fx</span> }],
  [
    { name: "Paragraph", icon: <Svg size={16}><path d="M15 3v15M11 3v15M7 3h11" /><path d="M11 2v9H7a4.500 4.500 0 0 1 0-9z" fill="currentColor" stroke="none" /></Svg> },
    { name: "Character", icon: <span className="border-r border-current pr-[2px] text-base leading-none font-bold">A</span> },
  ],
  [{ name: "Text Wrap", icon: <WrapLines kind="shape" /> }],
  [{ name: "Pathfinder", icon: <Svg size={19}><path d="M5 9V3h14v12h-9" strokeDasharray="4 1" /><path d="M2 10h7v7H2zM7 12h5v5H7z" fill="#535353" strokeWidth={1.8} /></Svg> }],
];

function Dock() {
  return (
    <aside className="flex w-10 shrink-0 flex-col border-l-2 border-[#383838] bg-[#535353] text-[#c4c4c4]">
      <div className="flex h-3 items-center justify-end border-b border-[#383838] bg-[#434343] pr-[6px]"><Double left /></div>
      {dockGroups.map((g, i) => (
        <div key={i} className="flex flex-col items-center border-b border-[#383838] pb-px">
          <span className="flex h-[10px] items-center"><Grip /></span>
          {g.map((d) => (
            <button key={d.name} aria-label={d.name} className="flex h-7 items-center">
              <span className={`flex h-[23px] w-7 items-center justify-center rounded-sm ${d.name === "Pages" ? "bg-[#333]" : ""}`}>{d.icon}</span>
            </button>
          ))}
        </div>
      ))}
    </aside>
  );
}

/* ---------- book panel ---------- */

const chapters = [
  { letter: "א", pages: "א-ל", open: true },
  { letter: "ב", pages: "לא-נט" },
  { letter: "ג", pages: "ס-פב" },
  { letter: "ד", pages: "פג-קכו" },
  { letter: "ה", pages: "קכז-קנו" },
  { letter: "ו", pages: "קנז-קעט" },
  { letter: "ז", pages: "קפ-רט" },
  { letter: "ח", pages: "רי-רכא", open: true },
];

function BookPanel() {
  return (
    <div className="absolute top-[765px] right-[44px] w-[303px] rounded-t border border-[#383838] bg-[#535353] text-xs text-[#f0f0f0] shadow-lg">
      <WindowStrip />
      <PanelTabs title="Book אמרות  טהורות" />
      <table className="w-full border-collapse">
        <tbody>
          {chapters.map((c, i) => (
            <tr key={c.letter} className={`h-[22px] border-y border-[#5f5f5f] ${i === 0 ? "bg-[#4e6a85] font-bold" : ""}`}>
              <td className="w-[22px] border-r border-[#5f5f5f] pl-1 text-[#c4c4c4]">
                {i === 0 && <Svg size={13}><path d="M1 5h5l3 3v7H1zM9 10h4M14 2h4v4h-4zM14 8h4v4h-4zM14 14h4v4h-4z" /></Svg>}
              </td>
              <td className="w-[22px] border-r border-[#5f5f5f]">
                <span className="mx-auto flex h-[15px] w-3 items-center justify-center rounded-[2px] rounded-tr-[4px] border border-[#ff3f94] bg-[#2f0a1a] text-[7px] font-bold text-[#ff3f94]">Id</span>
              </td>
              <td className="pl-[5px] whitespace-nowrap">עימוד אמרות טהורות - סופי - {c.letter}</td>
              <td dir="rtl" className="w-[42px] text-right whitespace-nowrap">{c.pages}</td>
              <td className="w-[49px] pl-2">{c.open && <span className="block size-[7px] rounded-full bg-[#c4c4c4]" />}</td>
            </tr>
          ))}
        </tbody>
      </table>
      <div className="mt-[22px] flex h-[26px] items-center justify-end gap-[14px] border-t border-[#5f5f5f] pr-[23px] text-[#c4c4c4]">
        <Svg size={14} className="text-[#858585]"><path d="M0 6l6-5v3h4v4H6v3zM20 14l-6 5v-3h-4v-4h4V9z" fill="currentColor" stroke="none" /></Svg>
        <Download size={15} />
        <Printer size={14} strokeWidth={2.5} />
        <Plus size={14} strokeWidth={3} />
        <Minus size={14} strokeWidth={3} />
      </div>
      <div className="flex h-[7px] items-center justify-center border-t border-[#383838]"><Grip /></div>
    </div>
  );
}

/* ---------- dialogs ---------- */

function Radio({ name, label, checked = false }: { name: string; label: string; checked?: boolean }) {
  return (
    <label className="flex items-center gap-[10px]">
      <input
        type="radio"
        name={name}
        disabled
        defaultChecked={checked}
        className="size-3 appearance-none rounded-full border border-[#757575] checked:border-4 checked:border-[#858585]"
      />
      {label}
    </label>
  );
}

const dialogField = "h-[21px] rounded-sm bg-[#5e5e5e] px-[5px] text-[#b8b8b8] outline-none";

function NewSectionDialog() {
  return (
    <div role="dialog" aria-label="New Section" className="absolute top-[201px] left-[1049px] w-[523px] border border-[#a0a0a0] bg-[#535353] text-xs text-[#9a9a9a] shadow-xl">
      <h2 className="flex h-[30px] items-center bg-white pl-2 text-xs text-[#8f8f8f]">New Section</h2>
      <div className="flex gap-[15px] px-[15px] pt-[15px] pb-4">
        <div className="w-[381px] pt-[2px]">
          <fieldset className="rounded-sm border border-[#474747] px-[14px] pb-[14px]">
            <legend className="-ml-1 px-1">
              <label className="flex items-center gap-[7px] pr-2 text-[#858585]">
                <input type="checkbox" disabled defaultChecked className="peer sr-only" />
                <span className="flex size-3 items-center justify-center rounded-sm bg-[#8a8a8a] text-[#4a4a4a]">
                  <Svg size={10}><path d="M3 10l5 5 9-11" strokeWidth={3} /></Svg>
                </span>
                Start Section
              </label>
            </legend>
            <div className="flex h-[28px] items-center pt-2 pl-px"><Radio name="page" label="Automatic Page Numbering" /></div>
            <div className="flex h-8 items-center gap-[7px] pl-px">
              <Radio name="page" label="Start Page Numbering at:" checked />
              <input aria-label="Start page number" defaultValue="יא" disabled className={`${dialogField} w-14`} />
            </div>
            <fieldset className="mt-[13px] h-[126px] rounded-sm border border-[#474747] px-[7px]">
              <legend className="ml-[3px] px-1">Page Numbering</legend>
              <div className="grid grid-cols-[96px_70px] items-center gap-y-[5px] whitespace-nowrap">
                <label htmlFor="prefix" className="pr-[6px] text-right">Section Prefix:</label>
                <input id="prefix" disabled className={dialogField} />
                <label htmlFor="style" className="pr-[6px] text-right">Style:</label>
                <select id="style" disabled className={`${dialogField} w-[140px] appearance-none opacity-100`}><option>Hebrew Biblical</option></select>
                <label htmlFor="marker" className="pr-[6px] text-right">Section Marker:</label>
                <input id="marker" disabled className={`${dialogField} w-[140px]`} />
              </div>
              <label className="mt-[6px] flex items-center gap-2 pl-[3px] text-[#808080]">
                <input type="checkbox" disabled className="size-3 appearance-none border border-[#808080]" />
                Include Prefix when
              </label>
            </fieldset>
          </fieldset>
          <fieldset className="mt-[19px] h-[166px] rounded-sm border border-[#474747] pr-3 pl-[14px]">
            <legend className="-ml-1 px-1">Document Chapter Numbering</legend>
            <div className="flex h-[35px] items-center gap-[6px]">
              <label htmlFor="chapter-style">Style:</label>
              <span className="relative flex items-center">
                <select id="chapter-style" disabled className={`${dialogField} w-[110px] appearance-none opacity-100`}>
                  <option>1, 2, 3, 4...</option>
                </select>
                <span className="pointer-events-none absolute right-1"><Chevron /></span>
              </span>
            </div>
            <div className="flex h-[26px] items-center pl-px"><Radio name="chapter" label="Automatic Chapter Numbering" checked /></div>
            <div className="flex h-[26px] items-center gap-[7px] pl-px">
              <Radio name="chapter" label="Start Chapter Numbering at:" />
              <input aria-label="Start chapter number" defaultValue="1" disabled className={`${dialogField} w-14`} />
            </div>
            <div className="flex h-[26px] items-center pl-px"><Radio name="chapter" label="Same as Previous Document in the Book" /></div>
            <p className="flex h-[26px] items-center whitespace-pre">Book Name: Book אמרות  טהורות.indb</p>
          </fieldset>
        </div>
        <div className="flex flex-1 flex-col gap-[10px]">
          <button disabled className="h-[26px] rounded-full bg-[#5a5a5a] text-[#858585]">OK</button>
          <button disabled className="h-[26px] rounded-full bg-[#5a5a5a] text-[#858585]">Cancel</button>
        </div>
      </div>
    </div>
  );
}

function Alert() {
  return (
    <div role="alertdialog" aria-label="Adobe InDesign" className="absolute top-[373px] left-[1204px] w-[213px] border border-[#4a8205] bg-[#535353] text-xs text-white shadow-[0_6px_18px_rgba(0,0,0,0.55)]">
      <h2 className="flex h-[30px] items-center bg-[#4a8205] pl-2">Adobe InDesign</h2>
      <div className="flex items-center pt-[15px] pl-4">
        <svg width="30" height="30" viewBox="0 0 30 30" aria-hidden="true">
          <path d="M15 0L30 30H0z" fill="#f6c500" />
          <rect x="13" y="8" width="4" height="13" rx="1" fill="#535353" />
          <rect x="13" y="23" width="4" height="4" fill="#535353" />
        </svg>
        <p className="ml-[22px]">Invalid numeric value.</p>
      </div>
      <div className="flex justify-end pt-[17px] pr-[15px] pb-[15px]">
        <button className="h-[26px] w-20 rounded-full bg-[#479ff8]">OK</button>
      </div>
    </div>
  );
}

/* ---------- bottom bars ---------- */

function StatusBar() {
  return (
    <footer className="flex h-[17px] items-center bg-[#535353] text-[10px] text-[#e0e0e0]">
      <div className="flex items-center gap-3 pl-3 text-[#c4c4c4]">
        <Svg size={9}><path d="M2 1v18" strokeWidth={4} /><path d="M18 0v20L5 10z" fill="currentColor" stroke="none" /></Svg>
        <Svg size={9}><path d="M15 0v20L4 10z" fill="currentColor" stroke="none" /></Svg>
      </div>
      <div className="ml-[11px] flex h-[15px] w-[90px] items-center rounded-sm border border-[#6c6c6c] bg-[#434343]">
        <input aria-label="Page" defaultValue="יא" className="w-full bg-transparent pl-[3px] outline-none" />
        <span className="flex h-full w-5 items-center justify-center border-l border-[#6c6c6c]"><Chevron /></span>
      </div>
      <div className="flex items-center gap-[10px] pl-3 text-[#c4c4c4]">
        <Svg size={9}><path d="M5 0v20l11-10z" fill="currentColor" stroke="none" /></Svg>
        <Svg size={9}><path d="M18 1v18" strokeWidth={4} /><path d="M2 0v20l13-10z" fill="currentColor" stroke="none" /></Svg>
        <Svg size={16} className="ml-1"><path d="M4 15a7 7 0 1 1 12-3" strokeWidth={2.5} /><path d="M8 6h4l3 3v8H8z" fill="currentColor" stroke="none" /></Svg>
      </div>
      <button className="ml-[18px] flex w-[112px] items-center justify-between">[Basic] (working) <Chevron /></button>
      <span className="ml-[14px] size-[10px] rounded-full bg-[#43a843]" />
      <button className="ml-[6px] flex w-[71px] items-center justify-between">No errors <Chevron /></button>
      <div className="ml-[5px] flex h-full flex-1 items-center bg-[#434343] pl-1">
        <Svg size={9} className="text-[#8a8a8a]"><path d="M13 2l-7 8 7 8" strokeWidth={2.5} /></Svg>
        <span className="ml-[131px] h-[14px] flex-1 rounded-full bg-[#666]" />
      </div>
    </footer>
  );
}

const adobeBox = "flex size-[22px] items-center justify-center border-2 text-[11px] font-bold";

const apps: { name: string; icon: ReactNode; running?: boolean; active?: boolean }[] = [
  {
    name: "Word",
    running: true,
    icon: (
      <svg width="24" height="24" viewBox="0 0 24 24"><path d="M12 4h11v16H12z" fill="#fff" /><path d="M14 7h7M14 10h7M14 13h7M14 16h7" stroke="#2b579a" /><path d="M1 4l13-3v22L1 20z" fill="#2b579a" /><path d="M4 8l1.500 8L7.500 9l2 7L11 8" fill="none" stroke="#fff" strokeWidth="1.500" /></svg>
    ),
  },
  { name: "Bridge", icon: <span className={`${adobeBox} border-[#f5a800] bg-[#1d1400] text-[#f5a800]`}>Br</span> },
  { name: "InDesign", running: true, active: true, icon: <span className={`${adobeBox} border-[#f03a8c] bg-[#2d0517] text-[#f03a8c]`}>Id</span> },
  { name: "Illustrator", icon: <span className={`${adobeBox} border-[#f57c1f] bg-[#241300] text-[#f57c1f]`}>Ai</span> },
  { name: "Photoshop", icon: <span className={`${adobeBox} border-[#20c0e8] bg-[#001c26] text-[#20c0e8]`}>Ps</span> },
  {
    name: "Photos",
    icon: <svg width="17" height="22" viewBox="0 0 18 22"><path d="M1 0h12l5 5v17H1z" fill="#fff" /><path d="M3 17V9h12v8z" fill="#5fb0ee" /><path d="M3 17l4-5 3 3 2-2 3 4z" fill="#0a4c8a" /></svg>,
  },
  {
    name: "File Explorer",
    running: true,
    icon: <svg width="24" height="22" viewBox="0 0 24 22"><path d="M2 2h8l2 3h10v15H2z" fill="#f5d071" /><path d="M2 8h20v12H2z" fill="#fbe7a2" /><path d="M6 20v-6h12v6h-3v-3H9v3z" fill="#3aa0dd" /></svg>,
  },
  {
    name: "Excel",
    icon: <svg width="24" height="24" viewBox="0 0 24 24"><path d="M12 4h11v16H12z" fill="#fff" /><path d="M14 7h8M14 10h8M14 13h8M14 16h8M18 5v14" stroke="#1f7244" /><path d="M1 4l13-3v22L1 20z" fill="#1f7244" /><path d="M4.500 8l6 8M10.500 8l-6 8" stroke="#fff" strokeWidth="1.800" /></svg>,
  },
  {
    name: "Everything",
    icon: <svg width="24" height="24" viewBox="0 0 24 24" fill="none" stroke="#f57c1f"><circle cx="14" cy="9" r="6.500" strokeWidth="4" /><path d="M9 14l-7 8" strokeWidth="4.500" /></svg>,
  },
  {
    name: "Chrome",
    running: true,
    icon: (
      <svg width="24" height="24" viewBox="0 0 24 24"><circle cx="12" cy="12" r="11" fill="#fbc116" /><path d="M12 12L2.500 6.500A11 11 0 0 1 21.500 6.500z" fill="#e33b2e" /><path d="M12 1a11 11 0 0 1 9.600 6H12z" fill="#e33b2e" /><path d="M2.500 6.500A11 11 0 0 0 12 23l4-8z" fill="#2da94f" /><circle cx="12" cy="12" r="5" fill="#fff" /><circle cx="12" cy="12" r="4" fill="#4285f4" /></svg>
    ),
  },
  {
    name: "Internet Explorer",
    icon: (
      <svg width="24" height="24" viewBox="0 0 24 24" fill="none"><path d="M5 13h15a8 8 0 1 0-1.500 5" stroke="#4cc3f2" strokeWidth="4" /><path d="M3 22C-1 18 9 4 18 2c4-1 5 1 4 4" stroke="#f7c92c" strokeWidth="2" /></svg>
    ),
  },
  {
    name: "Outlook",
    icon: <svg width="24" height="24" viewBox="0 0 24 24"><path d="M12 7h11v11H12z" fill="#fff" /><path d="M13 9l4 4 6-5" fill="none" stroke="#0072c6" strokeWidth="1.500" /><path d="M1 4l13-3v22L1 20z" fill="#0072c6" /><ellipse cx="7.500" cy="12" rx="2.500" ry="3.500" fill="none" stroke="#fff" strokeWidth="2" /></svg>,
  },
  {
    name: "Edge",
    icon: <svg width="22" height="22" viewBox="0 0 22 22"><path d="M1 10C2 3 7 0 12 0c6 0 10 5 9 12H8c0 7 8 7 12 4v4C10 25 2 20 4 12c1-3 3-5 5-6-1 1-2 2-2 4h8c0-5-9-5-14 0z" fill="#0f78d4" /></svg>,
  },
  {
    name: "Snipping Tool",
    icon: (
      <svg width="26" height="24" viewBox="0 0 26 24" fill="none"><ellipse cx="12" cy="13" rx="11" ry="6" fill="#8a8a8a" transform="rotate(-15 12 13)" /><ellipse cx="13" cy="9" rx="11" ry="7" fill="#eee" stroke="#d33" transform="rotate(-15 13 9)" /><path d="M9 5l9 11M16 5l-2 11" stroke="#888" strokeWidth="1.500" /><circle cx="14" cy="20" r="2.500" stroke="#1b82d1" strokeWidth="2" /><circle cx="21" cy="17" r="2.500" stroke="#1b82d1" strokeWidth="2" /></svg>
    ),
  },
  {
    name: "Task View",
    icon: <svg width="18" height="18" viewBox="0 0 18 18" fill="none" stroke="#fff"><path d="M5.500 4.500h11v9h-11zM5.500 0v2h11V0M5.500 18v-2h11v2M1.500 0v3M1.500 8v10" /><path d="M0 4h3v3H0z" fill="#fff" stroke="none" /></svg>,
  },
  {
    name: "Search",
    icon: <svg width="18" height="18" viewBox="0 0 18 18" fill="none" stroke="#fff" strokeWidth="1.300"><circle cx="11" cy="6.500" r="5.500" /><path d="M7 10.500L1 17" /></svg>,
  },
  {
    name: "Start",
    icon: <svg width="16" height="16" viewBox="0 0 16 16" fill="#fff"><path d="M0 2l7-1v6.500H0zM8 1l8-1v7.500H8zM0 8.500h7V15l-7-1zM8 8.500h8V16l-8-1z" /></svg>,
  },
];

function TaskBar() {
  return (
    <footer className="flex h-10 items-center bg-[#0f0b09] text-xs text-[#f0f0f0]">
      <span className="ml-1 h-full w-px bg-[#555]" />
      <button aria-label="Notifications" className="relative ml-5 h-7 w-4">
        <svg width="16" height="17" viewBox="0 0 16 17"><path d="M0 0h16v12h-5l-4 5v-5H0z" fill="#fff" /><path d="M3 3.500h10M3 6.500h10M3 9.500h6" stroke="#222" /></svg>
        <span className="absolute right-2 bottom-0 flex size-4 items-center justify-center rounded-full border border-[#aaa] bg-[#333] text-[10px] font-bold">9</span>
      </button>
      <div className="ml-4 flex w-[64px] flex-col items-center text-[11px] leading-[18px]">
        <span>14:48</span>
        <span>22/11/2018</span>
      </div>
      <span className="ml-[10px]">עבר</span>
      <svg width="15" height="14" viewBox="0 0 15 14" fill="none" stroke="#fff" className="ml-[11px]" aria-hidden="true"><path d="M0 4.500h2.500L6 1.500v11L2.500 9.500H0M9 5l4 4M13 5L9 9" strokeWidth="1.300" /></svg>
      <svg width="13" height="8" viewBox="0 0 13 8" fill="none" stroke="#fff" className="ml-3" aria-hidden="true"><path d="M1 7l5.500-6L12 7" strokeWidth="1.300" /></svg>
      <svg width="16" height="18" viewBox="0 0 16 18" fill="none" stroke="#fff" className="ml-[22px]" aria-hidden="true"><circle cx="10.500" cy="3.500" r="3" /><circle cx="5" cy="9.500" r="2.500" /><path d="M1 17c0-6 8-6 8 0M8 8c2-2 7-1 7 4" /></svg>
      <nav className="ml-auto flex h-full">
        {apps.map((a) => (
          <button
            key={a.name}
            aria-label={a.name}
            className={`flex h-full w-[49px] items-center justify-center border-b-2 ${a.running ? "border-[#9ccc5a]" : "border-transparent"} ${a.active ? "bg-[#3a3634]" : ""}`}
          >
            {a.icon}
          </button>
        ))}
      </nav>
    </footer>
  );
}

/* ---------- app ---------- */

const docs = [
  { id: "het", title: "*עימוד אמרות טהורות - סופי - ח.indd @ 88%" },
  { id: "alef", title: "*עימוד אמרות טהורות - סופי - א.indd @ 88%" },
];

export default function App() {
  const [tool, setTool] = useState("Selection Tool");
  const [doc, setDoc] = useState("alef");

  return (
    <div className="relative flex min-h-screen w-full flex-col overflow-hidden bg-[#434343] font-['Open_Sans','Liberation_Sans',sans-serif]">
      <MenuBar />
      <ControlBar />
      <div className="flex flex-1">
        <ToolBar active={tool} onPick={setTool} />
        <main className="flex min-w-0 flex-1 flex-col">
          <div className="flex h-[29px] border-b border-[#383838] text-xs font-semibold">
            {docs.map((d) => (
              <button
                key={d.id}
                onClick={() => setDoc(d.id)}
                className={`flex w-[276px] items-center justify-center gap-[9px] border-r border-[#383838] ${doc === d.id ? "bg-[#535353] text-[#f0f0f0]" : "text-[#a5a5a5]"}`}
              >
                {d.title} <Cross />
              </button>
            ))}
          </div>
          <TopRuler />
          <div className="flex flex-1">
            <SideRuler />
            <div className="min-w-0 flex-1 overflow-hidden bg-[#b9b9b9] pt-[3px] pl-[367px]">
              <div className="flex h-[871px] w-[1206px] border-y border-[#444]">
                <LeftPage />
                <div className="flex-1 border-x border-[#444] bg-white" />
              </div>
            </div>
            <div className="w-[15px] bg-[#474747]" />
          </div>
          <StatusBar />
        </main>
        <Dock />
      </div>
      <TaskBar />

      <MiniPanel
        title="Glyphs"
        className="top-[150px] left-[76px] w-[92px]"
        icon={<span className="font-['Liberation_Serif',serif] text-lg leading-none text-[#c4c4c4] italic">A</span>}
      />
      <StylesPanel />
      <MiniPanel
        title="Preflight"
        className="top-[958px] left-[16px] w-[100px]"
        icon={<Svg size={17} className="text-[#c4c4c4]"><path d="M1 1h8l4 4v12H1z" fill="currentColor" stroke="none" /><path d="M3 7l2 2 4-4M3 13l2 2" stroke="#535353" /><path d="M17 8l3 2-5 9-4 1 1-4z" fill="currentColor" stroke="#535353" strokeWidth={1} /></Svg>}
      />
      <PagesPanel />
      <div className="absolute top-[765px] right-0 w-[44px] border border-[#383838] bg-[#535353] text-[11px] font-semibold text-[#ececec]">
        <div className="flex h-[13px] items-center justify-end gap-[11px] border-b border-[#383838] bg-[#434343] pr-1 text-[#b8b8b8]">
          <Double />
          <Cross />
        </div>
        <p className="h-[69px] pt-[43px]">inder</p>
      </div>
      <BookPanel />
      <NewSectionDialog />
      <Alert />
    </div>
  );
}
